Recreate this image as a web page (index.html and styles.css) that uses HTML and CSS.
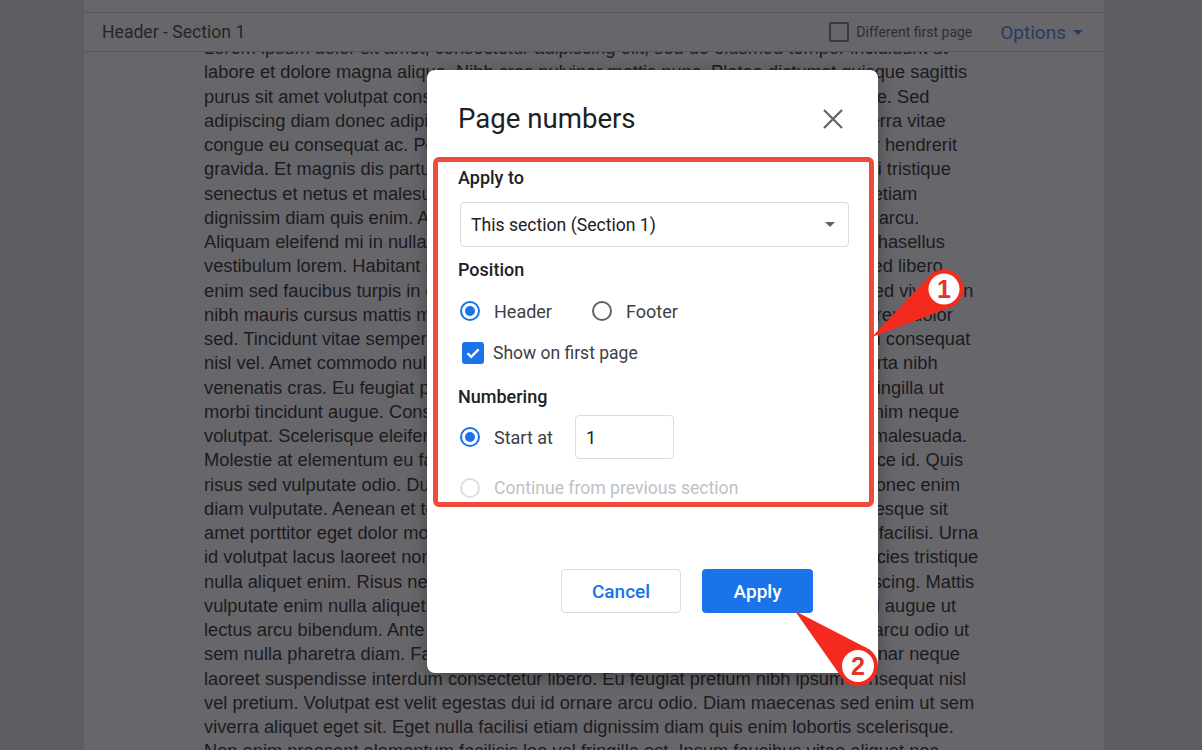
FILE: index.html
```html
<!DOCTYPE html>
<html lang="en">
<head>
<meta charset="utf-8">
<title>Page numbers</title>
<link rel="stylesheet" href="styles.css">
</head>
<body>
<div class="page">
  <div class="hf-bar">
    <div class="hf-title">Header - Section 1</div>
    <label class="dfp"><span class="dfp-box"></span>Different first page</label>
    <div class="options">Options <span class="caret"></span></div>
  </div>
  <div class="body-text">
    <div>Lorem ipsum dolor sit amet, consectetur adipiscing elit, sed do eiusmod tempor incididunt ut</div>
    <div>labore et dolore magna aliqua. Nibh cras pulvinar mattis nunc. Platea dictumst quisque sagittis</div>
    <div>purus sit amet volutpat consequat mauris nunc congue. Pretium viverra suspendisse. Sed</div>
    <div>adipiscing diam donec adipiscing tristique risus nec feugiat fermentum posuere viverra vitae</div>
    <div>congue eu consequat ac. Pellentesque habitant morbi tristique senectus nunc tortor hendrerit</div>
    <div>gravida. Et magnis dis parturient montes nascetur ridiculus mus. Sed habitant morbi tristique</div>
    <div>senectus et netus et malesuada fames ac turpis egestas. Nunc egestas diam arcu etiam</div>
    <div>dignissim diam quis enim. Amet consectetur adipiscing elit ut aliquet purus sit amet arcu.</div>
    <div>Aliquam eleifend mi in nulla posuere sollicitudin aliquam ultrices sapien sed orci a phasellus</div>
    <div>vestibulum lorem. Habitant morbi tristique senectus et netus et malesuada fames sed libero</div>
    <div>enim sed faucibus turpis in eu bibendum neque egestas congue quisque egestas sed viverra in</div>
    <div>nibh mauris cursus mattis molestie a iaculis at erat pellentesque adipiscing elit ut lorem dolor</div>
    <div>sed. Tincidunt vitae semper quis lectus nulla at volutpat diam sed venenatis tellus in consequat</div>
    <div>nisl vel. Amet commodo nulla facilisi nullam vehicula ipsum a arcu cursus augue porta nibh</div>
    <div>venenatis cras. Eu feugiat pretium nibh ipsum consequat nisl amet pretium lectus fringilla ut</div>
    <div>morbi tincidunt augue. Consequat porta nibh venenatis cras sed eget velit aliquet enim neque</div>
    <div>volutpat. Scelerisque eleifend donec pretium vulputate sapien nec sagittis aliquam malesuada.</div>
    <div>Molestie at elementum eu facilisis sed odio morbi quis commodo odio aenean a fusce id. Quis</div>
    <div>risus sed vulputate odio. Duis diam quam nulla porttitor massa id neque aliquam. Donec enim</div>
    <div>diam vulputate. Aenean et tortor at risus viverra adipiscing at in tellus donec pellentesque sit</div>
    <div>amet porttitor eget dolor morbi non arcu risus quis varius quam quisque id diam vel facilisi. Urna</div>
    <div>id volutpat lacus laoreet non curabitur gravida arcu ac tortor dignissim convallis ultricies tristique</div>
    <div>nulla aliquet enim. Risus nec feugiat in fermentum posuere urna nec tincidunt adipiscing. Mattis</div>
    <div>vulputate enim nulla aliquet porttitor lacus luctus accumsan tortor posuere ac ut sed augue ut</div>
    <div>lectus arcu bibendum. Ante in nibh mauris cursus mattis molestie a iaculis at tellus arcu odio ut</div>
    <div>sem nulla pharetra diam. Faucibus a pellentesque sit amet porttitor odio morbi pulvinar neque</div>
    <div>laoreet suspendisse interdum consectetur libero. Eu feugiat pretium nibh ipsum consequat nisl</div>
    <div>vel pretium. Volutpat est velit egestas dui id ornare arcu odio. Diam maecenas sed enim ut sem</div>
    <div>viverra aliquet eget sit. Eget nulla facilisi etiam dignissim diam quis enim lobortis scelerisque.</div>
    <div>Non enim praesent elementum facilisis leo vel fringilla est. Ipsum faucibus vitae aliquet nec</div>
  </div>
</div>

<div class="scrim"></div>

<div class="dialog" role="dialog" aria-label="Page numbers">
  <div class="dlg-head">
    <div class="dlg-title">Page numbers</div>
    <svg class="close" width="20" height="20" viewBox="0 0 20 20" aria-label="Close"><path d="M1 1L19 19M19 1L1 19" stroke="#5f6368" stroke-width="2.2" fill="none"/></svg>
  </div>
  <div class="highlight">
    <div class="lbl lbl-first">Apply to</div>
    <div class="select"><span>This section (Section 1)</span><span class="sel-caret"></span></div>
    <div class="lbl lbl-pos">Position</div>
    <div class="row row-pos">
      <div class="opt"><span class="radio on"></span><span>Header</span></div>
      <div class="opt opt-footer"><span class="radio"></span><span>Footer</span></div>
    </div>
    <div class="row row-check">
      <span class="check"><svg width="16" height="16" viewBox="0 0 16 16"><path d="M2.5 8.2L6.2 11.8L13.6 4.4" stroke="#fff" stroke-width="2.3" fill="none"/></svg></span><span>Show on first page</span>
    </div>
    <div class="lbl lbl-num">Numbering</div>
    <div class="row row-start">
      <div class="opt"><span class="radio on"></span><span>Start at</span></div>
      <div class="num-input">1</div>
    </div>
    <div class="row row-cont disabled">
      <div class="opt"><span class="radio"></span><span>Continue from previous section</span></div>
    </div>
  </div>
  <div class="actions">
    <button class="btn cancel">Cancel</button>
    <button class="btn apply">Apply</button>
  </div>
</div>

<svg class="callouts" width="1202" height="750" viewBox="0 0 1202 750">
  <g fill="#f42a1f">
    <polygon points="872,337 929.8,275.6 950.9,307.2"/>
    <circle cx="944" cy="289" r="19.5"/>
    <polygon points="795,611 867.2,648.2 841.7,677.4"/>
    <circle cx="858" cy="666" r="20"/>
  </g>
  <g fill="#fff">
    <circle cx="944" cy="289" r="15.5"/>
    <circle cx="858" cy="666" r="16"/>
  </g>
  <text x="944" y="297.5" class="callout-num">1</text>
  <text x="858" y="674.5" class="callout-num">2</text>
</svg>
</body>
</html>
```

FILE: styles.css
```css
* { box-sizing: border-box; }
html, body { margin: 0; padding: 0; }
body {
  width: 1202px;
  height: 750px;
  overflow: hidden;
  position: relative;
  background: #e2e0e4;
  font-family: Roboto, "Liberation Sans", Arial, sans-serif;
}

/* document page */
.page {
  margin-left: 84px;
  width: 1020px;
  height: 750px;
  background: #fff;
  padding-top: 12px;
  overflow: hidden;
}
.hf-bar {
  position: relative;
  z-index: 1;
  height: 40px;
  background: #fff;
  border-top: 1px solid #c9c9cc;
  border-bottom: 1px solid #c9c9cc;
  display: flex;
  align-items: center;
  padding: 0 21px 0 18px;
}
.hf-title { flex: 1; font-size: 17.6px; color: #202124; }
.dfp {
  display: flex;
  align-items: center;
  gap: 7px;
  font-size: 14px;
  color: #3c4043;
  margin-right: 28px;
}
.dfp-box {
  width: 20px;
  height: 20px;
  border: 2px solid #5f6368;
  border-radius: 2px;
}
.options {
  display: flex;
  align-items: center;
  gap: 7px;
  font-size: 19px;
  color: #1a73e8;
}
.caret {
  width: 0;
  height: 0;
  border-left: 5px solid transparent;
  border-right: 5px solid transparent;
  border-top: 5px solid #1a73e8;
}
.body-text {
  margin-top: -16px;
  padding-left: 120px;
  font-family: "Liberation Sans", Arial, sans-serif;
  font-size: 18.3px;
  line-height: 24.25px;
  color: #000;
  white-space: nowrap;
}

/* dim backdrop */
.scrim {
  position: absolute;
  inset: 0;
  z-index: 2;
  background: rgba(40, 38, 44, 0.706);
}

/* dialog */
.dialog {
  position: absolute;
  z-index: 3;
  left: 427px;
  top: 70px;
  width: 451px;
  height: 603px;
  background: #fff;
  border-radius: 8px;
  box-shadow: 0 4px 18px rgba(0, 0, 0, 0.3);
}
.dlg-head {
  display: flex;
  align-items: center;
  justify-content: space-between;
  padding: 33px 35px 22px 31px;
}
.dlg-title {
  font-size: 27.6px;
  line-height: 32px;
  color: #202124;
}
.close { display: block; }

.highlight {
  margin: 0 4px 0 6px;
  border: 5px solid #ee4b3d;
  border-radius: 6px;
  padding: 5px 20px 2px 20px;
}
.lbl {
  font-size: 18px;
  font-weight: 500;
  line-height: 22px;
  color: #202124;
}
.lbl-pos { margin-top: 12px; }
.lbl-num { margin-top: 21px; }

.select {
  margin: 13px 0 0 2px;
  height: 45px;
  border: 1px solid #dadce0;
  border-radius: 4px;
  display: flex;
  align-items: center;
  justify-content: space-between;
  padding: 0 13px 0 10px;
  font-size: 17.6px;
  color: #202124;
}
.sel-caret {
  width: 0;
  height: 0;
  border-left: 5px solid transparent;
  border-right: 5px solid transparent;
  border-top: 5px solid #5f6368;
}

.row {
  display: flex;
  align-items: center;
  height: 24px;
  font-size: 18px;
  color: #3c4043;
}
.row-pos { margin-top: 18px; }
.row-check { margin-top: 18px; font-size: 17.5px; }
.row-start { margin-top: 7px; height: 44px; }
.row-cont { margin-top: 17px; font-size: 17.6px; }

.opt {
  display: flex;
  align-items: center;
  gap: 14px;
}
.opt-footer { margin-left: 38px; }

.radio {
  width: 20px;
  height: 20px;
  margin-left: 2px;
  border: 2px solid #5f6368;
  border-radius: 50%;
  display: flex;
  align-items: center;
  justify-content: center;
}
.radio.on { border-color: #1a73e8; }
.radio.on::after {
  content: "";
  width: 10px;
  height: 10px;
  border-radius: 50%;
  background: #1a73e8;
}
.disabled { color: #bdc1c6; }
.disabled .radio { border-color: #dcdee2; }

.check {
  width: 22px;
  height: 22px;
  margin: 0 9px 0 4px;
  border-radius: 3px;
  background: #1a73e8;
  display: flex;
  align-items: center;
  justify-content: center;
}
.check svg { display: block; }

.num-input {
  margin-left: 22px;
  width: 99px;
  height: 44px;
  border: 1px solid #dadce0;
  border-radius: 4px;
  padding-left: 10px;
  display: flex;
  align-items: center;
  font-size: 18px;
  color: #202124;
}

.actions {
  display: flex;
  justify-content: flex-end;
  gap: 21px;
  margin-top: 62px;
  padding-right: 65px;
}
.btn {
  height: 44px;
  border-radius: 4px;
  font-family: Roboto, "Liberation Sans", Arial, sans-serif;
  font-size: 19px;
  font-weight: 500;
  display: flex;
  align-items: center;
  justify-content: center;
  padding: 0;
  cursor: pointer;
}
.cancel {
  width: 120px;
  background: #fff;
  border: 1px solid #dadce0;
  color: #1a73e8;
}
.apply {
  width: 111px;
  background: #1a73e8;
  border: none;
  color: #fff;
}

/* annotation callouts */
.callouts {
  position: absolute;
  z-index: 4;
  left: 0;
  top: 0;
  pointer-events: none;
}
.callout-num {
  font-family: "Liberation Sans", Arial, sans-serif;
  font-weight: bold;
  font-size: 25px;
  fill: #e3342b;
  text-anchor: middle;
}
```
